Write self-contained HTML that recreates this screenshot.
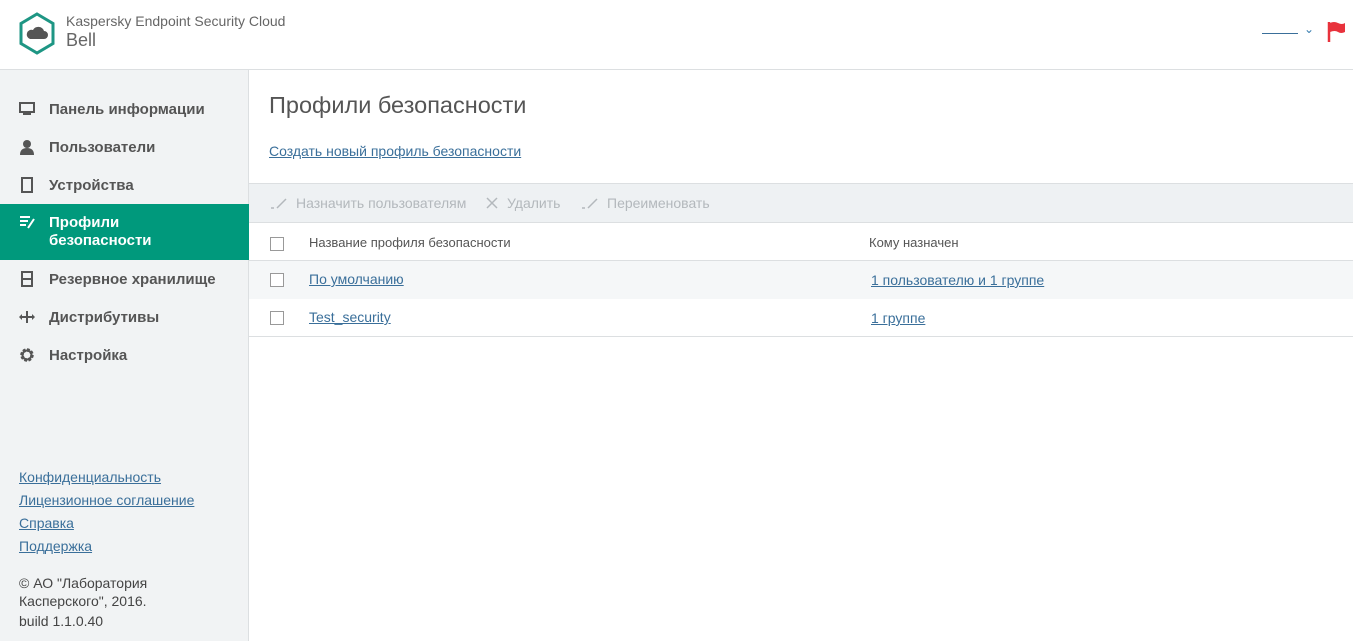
<!DOCTYPE html>
<html><head><meta charset="utf-8"><style>
*{box-sizing:border-box;margin:0;padding:0}
body{width:1353px;height:641px;overflow:hidden;background:#fff;font-family:"Liberation Sans",sans-serif;color:#444;position:relative}
.hdr{position:absolute;left:0;top:0;width:1353px;height:70px;border-bottom:1px solid #dcdfe1;background:#fff}
.side{position:absolute;left:0;top:70px;width:249px;height:571px;background:#f1f3f4;border-right:1px solid #dcdfe1}
.nav{position:absolute;left:0;width:249px;height:38px;font-size:15px;font-weight:bold;color:#555;display:flex;align-items:center}
.nav .ic{position:absolute;left:19px;width:16px;height:16px}
.nav span.t{position:absolute;left:49px}
.act{background:#00997c;color:#fff;height:56px}
a{color:#3a6f9a;text-decoration:underline}
.foot{position:absolute;left:19px;font-size:14px}
.main{position:absolute;left:249px;top:70px;right:0}
.cb{position:absolute;left:21px;width:14px;height:14px;border:1px solid #999;background:#fff}
.row{position:absolute;left:0;right:0;height:38px;font-size:13px}
.row span,.row a{position:absolute;top:12px}
.row a{font-size:14px}
.tb span{position:absolute;top:11px}
</style></head><body>
<div class="hdr">
 <svg style="position:absolute;left:18px;top:12px" width="38" height="43" viewBox="0 0 38 43"><polygon points="19,2 35,11.5 35,31.5 19,41 3,31.5 3,11.5" fill="none" stroke="#1e9684" stroke-width="3"/><path d="M12 27 h14 a4 4 0 0 0 0-8 a6 6 0 0 0-11-1 a4.5 4.5 0 0 0-3 9z" fill="#555"/></svg>
 <div style="position:absolute;left:66px;top:13px;font-size:14px;color:#666">Kaspersky Endpoint Security Cloud</div>
 <div style="position:absolute;left:66px;top:30px;font-size:18px;color:#666">Bell</div>
 <div style="position:absolute;left:1262px;top:33px;width:36px;border-bottom:1px solid #3a6f9a"></div>
 <div style="position:absolute;left:1304px;top:22px;color:#3a7fb0;font-size:12px">&#8964;</div>
 <svg style="position:absolute;left:1327px;top:21px" width="20" height="22"><path d="M2 1 v20" stroke="#e8323c" stroke-width="2.5"/><path d="M3 2 q4-2 8 0 t7 0 v9 q-4 2-7 0 t-8 0z" fill="#e8323c"/></svg>
</div>
<div class="side">
 <div class="nav" style="top:20px"><svg class="ic" viewBox="0 0 16 16"><rect x="1" y="2" width="14" height="9" fill="none" stroke="#555" stroke-width="2"/><rect x="4" y="12" width="8" height="2" fill="#555"/></svg><span class="t">Панель информации</span></div>
 <div class="nav" style="top:58px"><svg class="ic" viewBox="0 0 16 16"><circle cx="8" cy="5" r="4" fill="#555"/><path d="M1 16 q0-7 7-7 q7 0 7 7z" fill="#555"/></svg><span class="t">Пользователи</span></div>
 <div class="nav" style="top:96px"><svg class="ic" viewBox="0 0 16 16"><rect x="3" y="1" width="10" height="14" fill="none" stroke="#555" stroke-width="2"/></svg><span class="t">Устройства</span></div>
 <div class="nav act" style="top:134px"><svg class="ic" style="top:10px" viewBox="0 0 16 16"><path d="M1 3h10M1 7h8M1 11h6" stroke="#fff" stroke-width="2"/><path d="M9 14l6-9" stroke="#fff" stroke-width="2"/></svg><span class="t" style="top:10px;line-height:18px">Профили<br>безопасности</span>
 <div style="position:absolute;left:228px;top:0;border-left:17px solid #00997c;border-top:28px solid transparent;border-bottom:28px solid transparent"></div></div>
 <div class="nav" style="top:190px"><svg class="ic" viewBox="0 0 16 16"><rect x="3" y="1" width="10" height="14" fill="none" stroke="#555" stroke-width="2"/><path d="M3 8h10" stroke="#555" stroke-width="2"/></svg><span class="t">Резервное хранилище</span></div>
 <div class="nav" style="top:228px"><svg class="ic" viewBox="0 0 16 16"><path d="M8 2v12M2 8h12" stroke="#555" stroke-width="2"/><path d="M0 8l3-3v6zM16 8l-3-3v6z" fill="#555"/></svg><span class="t">Дистрибутивы</span></div>
 <div class="nav" style="top:266px"><svg class="ic" viewBox="0 0 16 16"><circle cx="8" cy="8" r="5" fill="none" stroke="#555" stroke-width="3.5" stroke-dasharray="2.5 1.4"/><circle cx="8" cy="8" r="4.5" fill="none" stroke="#555" stroke-width="2"/></svg><span class="t">Настройка</span></div>
 <a class="foot" style="top:399px">Конфиденциальность</a>
 <a class="foot" style="top:422px">Лицензионное соглашение</a>
 <a class="foot" style="top:445px">Справка</a>
 <a class="foot" style="top:468px">Поддержка</a>
 <div class="foot" style="top:504px;line-height:18px;color:#444">© АО "Лаборатория<br>Касперского", 2016.</div>
 <div class="foot" style="top:543px;color:#444">build 1.1.0.40</div>
</div>
<div class="main">
 <div style="position:absolute;left:20px;top:22px;font-size:23.5px;color:#555">Профили безопасности</div>
 <a style="position:absolute;left:20px;top:73px;font-size:14px">Создать новый профиль безопасности</a>
 <div class="tb" style="position:absolute;left:0;right:0;top:113px;height:40px;background:#eef1f3;border-top:1px solid #dcdfe1;border-bottom:1px solid #dcdfe1;font-size:14px;color:#b3b8bc">
  <svg style="position:absolute;left:21px;top:12px" width="18" height="14"><path d="M1 12h3M7 12l9-9" stroke="#b3b8bc" stroke-width="1.5"/></svg>
  <span style="left:47px">Назначить пользователям</span>
  <svg style="position:absolute;left:237px;top:13px" width="12" height="12"><path d="M1 1l10 10M11 1l-10 10" stroke="#b3b8bc" stroke-width="1.5"/></svg>
  <span style="left:258px">Удалить</span>
  <svg style="position:absolute;left:332px;top:12px" width="18" height="14"><path d="M1 12h3M7 12l9-9" stroke="#b3b8bc" stroke-width="1.5"/></svg>
  <span style="left:358px">Переименовать</span>
 </div>
 <div class="row" style="top:153px;border-bottom:1px solid #dcdfe1"><div class="cb" style="top:14px"></div><span style="left:60px;color:#555">Название профиля безопасности</span><span style="left:620px;color:#555">Кому назначен</span></div>
 <div class="row" style="top:191px;background:#f5f7f8"><div class="cb" style="top:12px"></div><a style="left:60px;top:10px">По умолчанию</a><a style="left:622px;top:11px">1 пользователю и 1 группе</a></div>
 <div class="row" style="top:229px;border-bottom:1px solid #dcdfe1"><div class="cb" style="top:12px"></div><a style="left:60px;top:10px">Test_security</a><a style="left:622px;top:11px">1 группе</a></div>
</div>
</body></html>
